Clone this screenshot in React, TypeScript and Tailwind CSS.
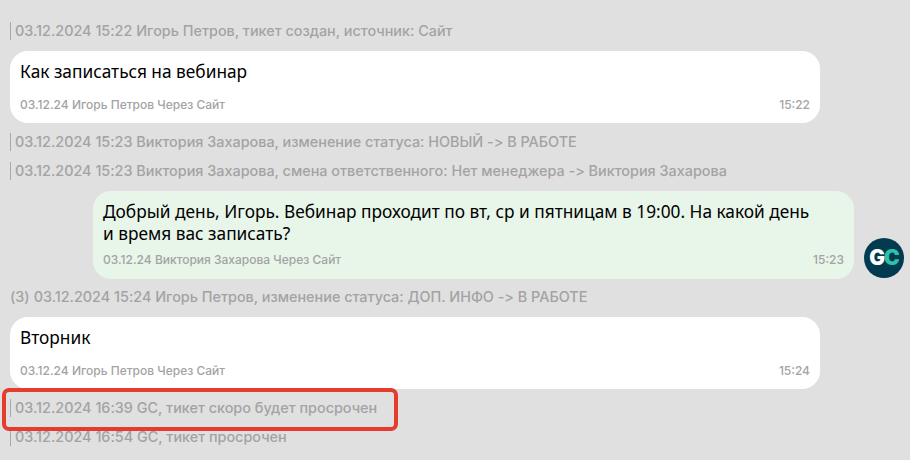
import { ReactNode } from 'react';

const FONT = "font-['Inter','Noto_Sans',sans-serif]";

function SysLine({ text, prefix, mt }: { text: string; prefix?: string; mt: string }) {
  return (
    <div className={`flex items-center h-[18px] text-[14.4px] leading-[18px] font-medium text-[#a3a3a3] whitespace-nowrap [font-variant-ligatures:none] [font-feature-settings:'calt'_0] ${mt}`}>
      {prefix ? (
        <span className="mr-[4px]">{prefix}</span>
      ) : (
        <span className="w-px h-[18px] bg-[#a8a8a8] mr-[4px]" />
      )}
      <span>{text}</span>
    </div>
  );
}

function Bubble({ children, meta, time, color, width, bodyH, metaH }: { children: ReactNode; meta: string; time: string; color: string; width: string; bodyH: string; metaH: string }) {
  return (
    <div className={`rounded-[18px] px-[10px] ${color} ${width}`}>
      <div className={`pt-[10px] text-[17.3px] leading-[22px] text-black font-['Noto_Sans',sans-serif] ${bodyH}`}>{children}</div>
      <div className={`flex justify-between text-[12px] leading-[18px] font-medium text-[#a3a3a3] ${metaH}`}>
        <span>{meta}</span>
        <span>{time}</span>
      </div>
    </div>
  );
}

export default function App() {
  return (
    <div className={`relative w-[910px] h-[460px] overflow-hidden bg-[#e0e0e0] pl-[10px] pt-[22px] ${FONT}`}>
      <SysLine mt="mt-0" text="03.12.2024 15:22 Игорь Петров, тикет создан, источник: Сайт" />
      <div className="mt-[11px]">
        <Bubble color="bg-white" width="w-[810px]" bodyH="h-[45px]" metaH="h-[27px]" meta="03.12.24 Игорь Петров Через Сайт" time="15:22">
          Как записаться на вебинар
        </Bubble>
      </div>
      <SysLine mt="mt-[10px]" text="03.12.2024 15:23 Виктория Захарова, изменение статуса: НОВЫЙ -> В РАБОТЕ" />
      <SysLine mt="mt-[11px]" text="03.12.2024 15:23 Виктория Захарова, смена ответственного: Нет менеджера -> Виктория Захарова" />

      <div className="flex items-end mt-[11px] ml-[83px]">
        <Bubble color="bg-[#e8f5e9]" width="w-[761px]" bodyH="h-[60px]" metaH="h-[28px]" meta="03.12.24 Виктория Захарова Через Сайт" time="15:23">
          Добрый день, Игорь. Вебинар проходит по вт, ср и пятницам в 19:00. На какой день
          <br />
          и время вас записать?
        </Bubble>
        <div className="ml-[10px] mb-px w-[40px] h-[40px] rounded-full bg-[#023b4f] flex items-center justify-center text-[21px] font-black tracking-[-1px]">
          <span className="text-white">G</span>
          <span className="text-[#2cc3ad]">C</span>
        </div>
      </div>

      <SysLine mt="mt-[9px]" prefix="(3)" text="03.12.2024 15:24 Игорь Петров, изменение статуса: ДОП. ИНФО -> В РАБОТЕ" />
      <div className="mt-[11px]">
        <Bubble color="bg-white" width="w-[810px]" bodyH="h-[45px]" metaH="h-[27px]" meta="03.12.24 Игорь Петров Через Сайт" time="15:24">
          Вторник
        </Bubble>
      </div>
      <SysLine mt="mt-[10px]" text="03.12.2024 16:39 GC, тикет скоро будет просрочен" />
      <SysLine mt="mt-[11px]" text="03.12.2024 16:54 GC, тикет просрочен" />

      <div className="absolute left-[2px] top-[388px] w-[396px] h-[43px] rounded-[7px] border-[4px] border-[#e53c2e]" />
    </div>
  );
}
